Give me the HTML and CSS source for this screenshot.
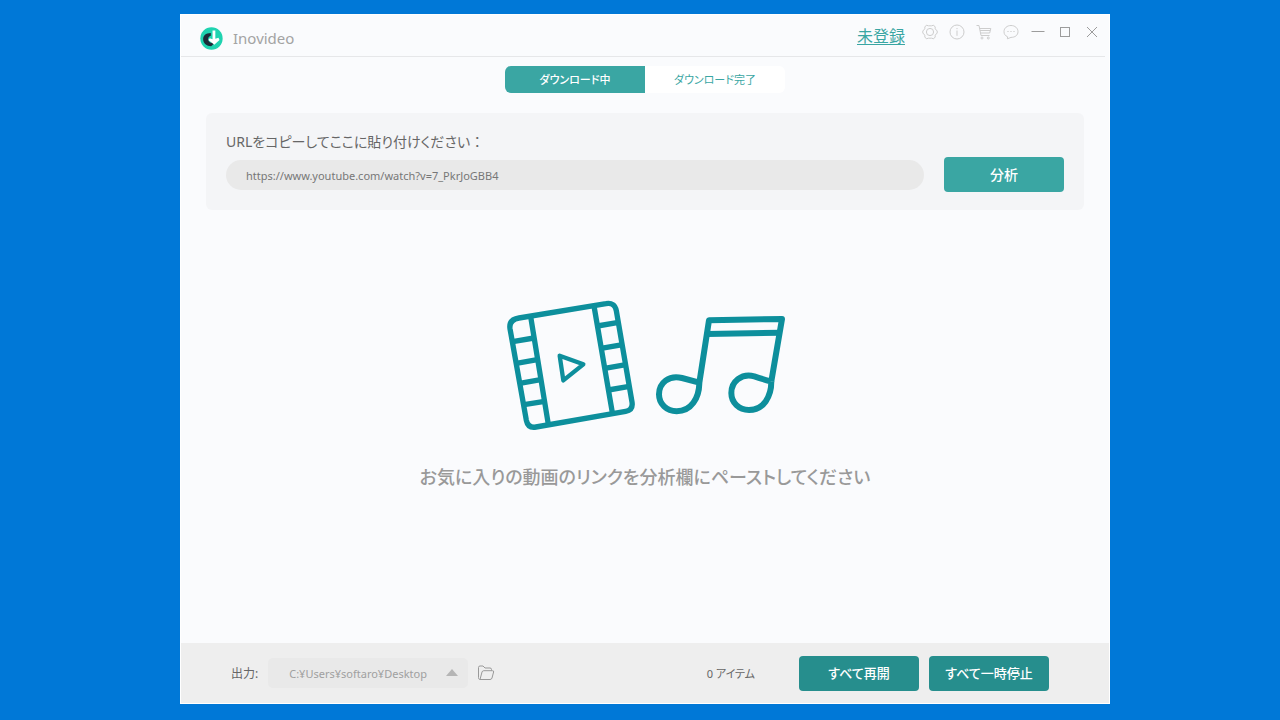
FILE: index.html
```html
<!DOCTYPE html>
<html lang="ja">
<head>
<meta charset="utf-8">
<meta name="viewport" content="width=device-width, initial-scale=1">
<title>Inovideo</title>
<link rel="stylesheet" href="styles.css">
</head>
<body>
<div class="window">
  <header class="titlebar">
    <div class="brand">
      <svg class="brand-logo" viewBox="0 0 66 66" aria-hidden="true">
        <circle cx="33" cy="33" r="32" fill="#1fd3b0"/>
        <path d="M31 17C16 17 9 25 9 35C9 47 19 55 32 55L41 47L29 34L31 30Z" fill="#1d2b39"/>
        <path d="M35 25C26 25 22 31 24 37C25 42 29 45 34 46L31 38L35 34Z" fill="#1fd3b0"/>
        <path d="M36 10H44V34L53 31L56 37L41 51L24 37L28 32L36 35Z" fill="#fff"/>
      </svg>
      <span class="brand-name">Inovideo</span>
    </div>
    <a class="register" href="#">未登録</a>
    <nav class="tools" aria-label="ウィンドウ">
      <button class="tool" type="button" aria-label="設定">
        <svg viewBox="0 0 18 18"><path d="M5.4 2.2L7.4 2.8H10.6L12.6 2.2L14.2 4V5.8L16.2 8V10L14.2 12.2V14L12.6 15.8L10.6 15.2H7.4L5.4 15.8L3.8 14V12.2L1.8 10V8L3.8 5.8V4Z"/><circle cx="9" cy="9" r="3.6"/></svg>
      </button>
      <button class="tool" type="button" aria-label="情報">
        <svg viewBox="0 0 18 18"><circle cx="9" cy="9" r="7"/><path d="M9 7.5V12.8M9 5V6.2"/></svg>
      </button>
      <button class="tool" type="button" aria-label="購入">
        <svg viewBox="0 0 18 18"><path d="M1.5 2.5H4L6 12.5H14.5M4.6 5.5H15.8L14.7 10H5.6M5 7.5H15"/><circle cx="7" cy="15" r="1"/><circle cx="13.3" cy="15" r="1"/></svg>
      </button>
      <button class="tool" type="button" aria-label="フィードバック">
        <svg viewBox="0 0 18 18"><path d="M5.6 13.8C3.2 12.8 2 11 2 8.7C2 5 5.2 2.5 9 2.5S16 5 16 8.7S12.8 14.4 9 14.4L5.4 15.8Z"/><path d="M5.4 8.5H6.6M8.4 8.5H9.6M11.4 8.5H12.6"/></svg>
      </button>
      <button class="tool tool-dark" type="button" aria-label="最小化">
        <svg viewBox="0 0 18 18"><path d="M2.5 8.5H15.5"/></svg>
      </button>
      <button class="tool tool-dark" type="button" aria-label="最大化">
        <svg viewBox="0 0 18 18"><rect x="4.5" y="4.5" width="9" height="9"/></svg>
      </button>
      <button class="tool tool-dark" type="button" aria-label="閉じる">
        <svg viewBox="0 0 18 18"><path d="M4 4L14 14M14 4L4 14"/></svg>
      </button>
    </nav>
  </header>

  <main class="content">
    <div class="tabs" role="tablist">
      <button class="tab tab-active" type="button" role="tab" aria-selected="true">ダウンロード中</button>
      <button class="tab" type="button" role="tab" aria-selected="false">ダウンロード完了</button>
    </div>

    <form class="analyze">
      <div class="field">
        <label class="field-label" for="url">URLをコピーしてここに貼り付けください<span class="full-width">：</span></label>
        <input class="field-input" id="url" type="text" value="https://www.youtube.com/watch?v=7_PkrJoGBB4">
      </div>
      <button class="button button-primary" type="button">分析</button>
    </form>

    <section class="empty">
      <svg class="empty-art" viewBox="-9 0 888 450" aria-hidden="true">
        <g class="art-frame">
          <path d="M57 84L318 41Q344 36 349 62L396 336Q400 360 377 364L108 411Q84 415 79 391L30 116Q26 89 57 84Z"/>
          <path d="M92 80L145 403M282 48L337 368"/>
          <path d="M38 155L102 144M49 220L112 209M59 280L122 269M72 344L134 334"/>
          <path d="M292 108L356 97M303 175L368 164M314 235L378 224M325 300L388 289"/>
        </g>
        <path class="art-play" d="M179 197L250 223L190 271Z"/>
        <g class="art-note" transform="translate(435 30)">
          <path d="M163 250C162 294 139 334 95 334C65 334 42 312 42 283C42 249 72 224 111 234Q137 241 163 248L192 61L411 57L379 244"/>
          <path d="M379 244C379 290 356 330 312 330C282 330 259 308 259 279C259 245 289 219 328 229Q352 237 377 244"/>
          <path d="M187 102L405 98"/>
        </g>
      </svg>
      <p class="empty-text">お気に入りの動画のリンクを分析欄にペーストしてください</p>
    </section>
  </main>

  <footer class="footer">
    <label class="output-label" for="output">出力:</label>
    <div class="output">
      <select class="output-select" id="output">
        <option>C:¥Users¥softaro¥Desktop</option>
      </select>
      <span class="output-arrow"></span>
    </div>
    <button class="folder" type="button" aria-label="フォルダーを開く">
      <svg viewBox="0 0 18 18"><path d="M3.5 15.5C2 15.5 1.5 15 1.5 13.5V3.5Q1.5 2 3 2H6L8 4H13Q14.5 4 14.5 5.5V6.5M3 15.5L5 8Q5.4 6.7 6.8 6.7H15.5Q17 6.7 16.6 8L15 14Q14.6 15.5 13 15.5H3"/></svg>
    </button>
    <span class="count">0 アイテム</span>
    <div class="actions">
      <button class="button button-dark" type="button">すべて再開</button>
      <button class="button button-dark" type="button">すべて一時停止</button>
    </div>
  </footer>
</div>
</body>
</html>
```

FILE: styles.css
```css
* {
  box-sizing: border-box;
}

body {
  margin: 0;
  min-height: 100vh;
  display: flex;
  padding: 14px 170px 16px 180px;
  background: #0078d7;
  color: #666;
  font-family: "Noto Sans", "Noto Sans CJK JP", sans-serif;
  font-size: 11px;
  font-feature-settings: "palt";
}

button,
input,
select {
  font: inherit;
  font-feature-settings: inherit;
  color: inherit;
  border: 0;
  padding: 0;
  margin: 0;
}

button {
  cursor: pointer;
}

.window {
  flex: 1;
  display: flex;
  flex-direction: column;
  background: #fafbfd;
  border: 1px solid #fff;
}

.titlebar {
  display: flex;
  align-items: flex-start;
  height: 42px;
  margin-right: 4px;
  padding: 8px 0 0 19px;
  border-bottom: 1px solid #e6e7e9;
}

.brand {
  display: flex;
  align-items: center;
  gap: 10px;
  margin-right: auto;
  padding-top: 3px;
}

.brand-logo {
  width: 23px;
  height: 23px;
}

.brand-name {
  font-size: 15px;
  line-height: 24px;
  color: #a3a3a3;
}

.register {
  margin-right: 11px;
  font-size: 16px;
  line-height: 26px;
  color: #3aa6a3;
  text-underline-offset: 2px;
}

.tools {
  display: flex;
}

.tool {
  width: 27px;
  height: 18px;
  display: flex;
  justify-content: center;
  background: none;
  color: #cdcdcd;
}

.tool-dark {
  color: #9c9c9c;
}

.tool svg,
.folder svg {
  width: 18px;
  height: 18px;
  fill: none;
  stroke: currentColor;
  stroke-width: 1;
}

.content {
  flex: 1;
  display: flex;
  flex-direction: column;
  padding: 9px 25px 0;
}

.tabs {
  align-self: center;
  display: flex;
  border-radius: 6px;
  overflow: hidden;
}

.tab {
  width: 140px;
  height: 27px;
  padding-bottom: 2px;
  background: #fff;
  color: #3aa6a3;
}

.tab-active {
  background: #3aa6a3;
  color: #fff;
  font-weight: 500;
}

.analyze {
  display: flex;
  align-items: flex-end;
  gap: 20px;
  margin-top: 20px;
  padding: 17px 20px 18px;
  border-radius: 6px;
  background: #f4f5f7;
}

.field {
  flex: 1;
  display: flex;
  flex-direction: column;
  gap: 6px;
  padding-bottom: 2px;
}

.field-label {
  font-size: 14px;
  line-height: 24px;
}

.full-width {
  font-feature-settings: normal;
}

.field-input {
  height: 30px;
  padding: 0 20px;
  border-radius: 15px;
  background: #e9e9e9;
  color: #777;
}

.button {
  width: 120px;
  height: 35px;
  padding-bottom: 2px;
  border-radius: 4px;
  color: #fff;
  font-weight: 500;
}

.button-primary {
  background: #3aa6a3;
  font-size: 14px;
}

.button-dark {
  background: #268e8d;
  font-size: 13px;
}

.empty {
  flex: 1;
  display: flex;
  flex-direction: column;
  align-items: center;
  padding-top: 80px;
}

.empty-art {
  width: 296px;
  height: 150px;
  fill: none;
  stroke: #0d8f9c;
  stroke-linejoin: round;
}

.art-frame {
  stroke-width: 16;
}

.art-play {
  stroke-width: 13;
}

.art-note {
  stroke-width: 18;
}

.empty-text {
  margin: 21px 0 0;
  font-size: 18px;
  font-weight: 500;
  line-height: 32px;
  color: #999;
}

.footer {
  display: flex;
  align-items: center;
  height: 60px;
  padding: 0 60px 0 50px;
  background: #eee;
}

.output-label {
  margin-right: 10px;
  font-size: 12px;
}

.output {
  position: relative;
  width: 200px;
}

.output-select {
  width: 100%;
  height: 30px;
  padding: 0 30px 0 21px;
  border-radius: 5px;
  background: #e9e9e9;
  color: #a0a0a0;
  appearance: none;
}

.output-arrow {
  position: absolute;
  top: 11px;
  right: 10px;
  border: solid transparent;
  border-width: 0 6px 7px;
  border-bottom-color: #b5b5b5;
  pointer-events: none;
}

.folder {
  display: flex;
  margin-left: 9px;
  background: none;
  color: #999;
}

.count {
  margin-left: auto;
  margin-right: 44px;
}

.actions {
  display: flex;
  gap: 10px;
}
```
